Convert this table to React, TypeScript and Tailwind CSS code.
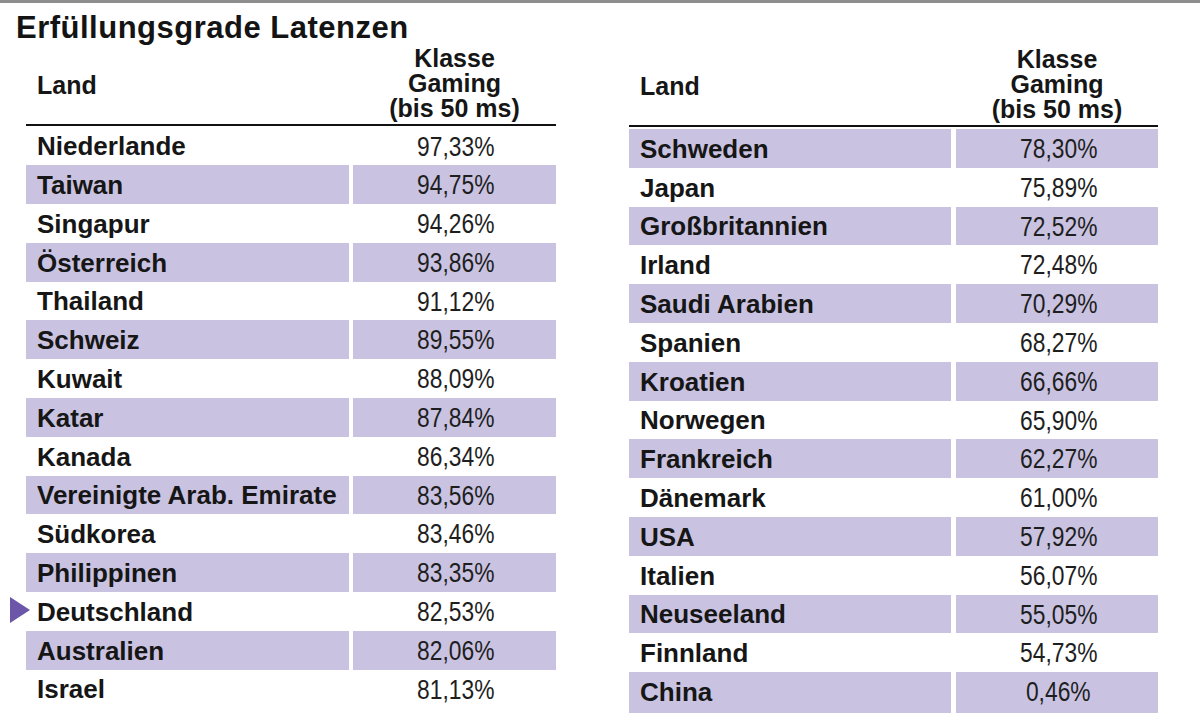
import React from "react";

type Row = { land: string; value: string; mark?: boolean };

const leftRows: Row[] = [
  { land: "Niederlande", value: "97,33%" },
  { land: "Taiwan", value: "94,75%" },
  { land: "Singapur", value: "94,26%" },
  { land: "Österreich", value: "93,86%" },
  { land: "Thailand", value: "91,12%" },
  { land: "Schweiz", value: "89,55%" },
  { land: "Kuwait", value: "88,09%" },
  { land: "Katar", value: "87,84%" },
  { land: "Kanada", value: "86,34%" },
  { land: "Vereinigte Arab. Emirate", value: "83,56%" },
  { land: "Südkorea", value: "83,46%" },
  { land: "Philippinen", value: "83,35%" },
  { land: "Deutschland", value: "82,53%", mark: true },
  { land: "Australien", value: "82,06%" },
  { land: "Israel", value: "81,13%" },
];

const rightRows: Row[] = [
  { land: "Schweden", value: "78,30%" },
  { land: "Japan", value: "75,89%" },
  { land: "Großbritannien", value: "72,52%" },
  { land: "Irland", value: "72,48%" },
  { land: "Saudi Arabien", value: "70,29%" },
  { land: "Spanien", value: "68,27%" },
  { land: "Kroatien", value: "66,66%" },
  { land: "Norwegen", value: "65,90%" },
  { land: "Frankreich", value: "62,27%" },
  { land: "Dänemark", value: "61,00%" },
  { land: "USA", value: "57,92%" },
  { land: "Italien", value: "56,07%" },
  { land: "Neuseeland", value: "55,05%" },
  { land: "Finnland", value: "54,73%" },
  { land: "China", value: "0,46%" },
];

const sans = "font-['Liberation_Sans',Arial,sans-serif]";

const Marker = () => (
  <svg
    className="absolute left-[-16px] top-[5px]"
    width="20"
    height="26"
    viewBox="0 0 20 26"
  >
    <polygon points="0,0 20,13 0,26" fill="#6b56a9" />
  </svg>
);

const Table = ({
  rows,
  cols,
  start,
}: {
  rows: Row[];
  cols: string;
  start: "odd" | "even";
}) => (
  <div className="flex flex-col">
    <div className={`grid ${cols} border-b-2 border-[#111]`}>
      <div className={`flex items-center pl-[11px] pt-[2px] ${sans} text-[25px] font-bold text-[#161616]`}>
        Land
      </div>
      <div className={`pb-[3px] text-center ${sans} text-[25px] leading-[25px] font-bold text-[#161616]`}>
        <div>Klasse</div>
        <div>Gaming</div>
        <div>(bis 50 ms)</div>
      </div>
    </div>
    <div className={`flex flex-col ${start === "even" ? "pt-[1.5px]" : ""}`}>
      {rows.map((r, i) => {
        const band = start === "odd" ? i % 2 === 1 : i % 2 === 0;
        const bg = band ? "bg-[#c9c3e1]" : "bg-white";
        return (
          <div key={r.land} className={`relative grid ${cols} h-[38.8px] py-[0.5px]`}>
            {r.mark && <Marker />}
            <div className={`flex items-center pl-[11px] ${bg} ${sans} text-[26px] font-bold text-[#161616]`}>
              {r.land}
            </div>
            <div className={`flex items-center justify-center pl-[3px] ${bg} ${sans} text-[27px] text-[#1e1e1e]`}>
              <span className="inline-block scale-x-[0.845]">{r.value}</span>
            </div>
          </div>
        );
      })}
    </div>
  </div>
);

export default function App() {
  return (
    <div className="w-[1200px] h-[720px] bg-white overflow-hidden">
      <div className="h-[3px] bg-[#8e8e8e]" />
      <div className={`mt-[10px] pl-[16px] h-[30px] ${sans} text-[31px] leading-[30px] font-bold tracking-[0.5px] text-[#141414]`}>
        Erfüllungsgrade Latenzen
      </div>
      <div className="mt-[3px] flex pl-[26px] gap-[73px]">
        <div className="w-[530px]">
          <Table rows={leftRows} cols="grid-cols-[323px_203px] gap-x-[4px]" start="odd" />
        </div>
        <div className="w-[529px] mt-[1px]">
          <Table rows={rightRows} cols="grid-cols-[322px_202px] gap-x-[5px]" start="even" />
        </div>
      </div>
    </div>
  );
}
